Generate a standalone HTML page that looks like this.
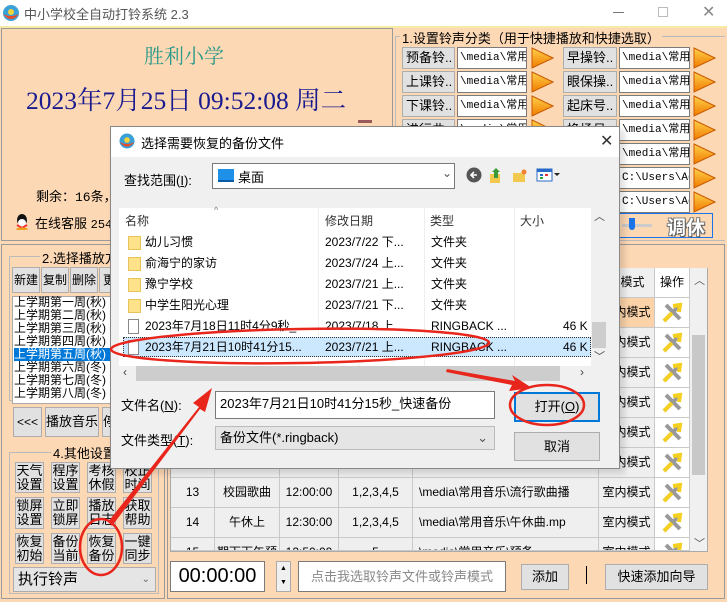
<!DOCTYPE html>
<html><head><meta charset="utf-8"><style>
*{margin:0;padding:0;box-sizing:border-box}
body{width:727px;height:602px;overflow:hidden;position:relative;background:#fdd8b4;font-family:"Liberation Sans","Noto Sans CJK SC",sans-serif;font-size:12px;color:#000}
.a{position:absolute}
.btn{position:absolute;background:#e1e1e1;border:1px solid #adadad;text-align:center;font-size:12px}
.fld{position:absolute;background:#fff;border:1px solid #7a7a7a;font-family:"Liberation Mono","Noto Sans CJK SC",monospace;font-size:11px;overflow:hidden;white-space:nowrap;line-height:20px;padding-left:2px}
.gb{position:absolute;background:#e1e1e1;border:1px solid #adadad;font-size:13px;line-height:14px;text-align:center;padding-top:1px}
.li{position:absolute;left:14px;width:98px;height:13px;line-height:13px;font-size:12px;white-space:nowrap;overflow:hidden}
.row{position:absolute;left:128px;height:21px;line-height:21px;font-size:12px;white-space:nowrap}
.cell{position:absolute;background:#efefef;border-right:1px solid #c9c9c9;border-bottom:1px solid #c9c9c9;font-size:12px;text-align:center;line-height:29px;white-space:nowrap;overflow:hidden}
</style></head><body>
<div class="a" style="left:0;top:0;width:727px;height:26px;background:#fff"></div>
<div class="a" style="left:0;top:26px;width:727px;height:2px;background:#f6eba2"></div>
<svg class="a" style="left:2px;top:4px" width="18" height="18"><circle cx="9" cy="9" r="8" fill="#3aa0d8"/><path d="M1 10 Q9 20 17 10 Q9 14 1 10Z" fill="#e84a2a"/><circle cx="9" cy="8" r="3" fill="#f5d33a"/></svg>
<div class="a" style="left:24px;top:4px;font-size:13px;color:#555">中小学校全自动打铃系统 2.3</div>
<div class="a" style="left:613px;top:12px;width:11px;height:1px;background:#777"></div>
<div class="a" style="left:658px;top:7px;width:10px;height:10px;border:1px solid #bbb"></div>
<div class="a" style="left:702px;top:2px;font-size:16px;color:#888">✕</div>

<div class="a" style="left:1px;top:28px;width:392px;height:213px;border:1px solid #9a9a9a"></div>
<div class="a" style="left:144px;top:40px;font-size:20px;color:#2a9a8a;font-family:'Liberation Serif','Noto Serif CJK SC',serif">胜利小学</div>
<div class="a" style="left:26px;top:81px;font-size:25.5px;color:#1a1a90;font-family:'Liberation Serif','Noto Serif CJK SC',serif;white-space:nowrap">2023年7月25日 09:52:08 周二</div>
<div class="a" style="left:358px;top:120px;width:14px;height:3px;background:#9a5a5a"></div>
<div class="a" style="left:36px;top:186px;font-size:13px;font-family:'Liberation Mono','Noto Sans CJK SC',monospace">剩余：16条，</div>
<svg class="a" style="left:14px;top:212px" width="16" height="18"><ellipse cx="8" cy="8" rx="5" ry="6" fill="#111"/><ellipse cx="8" cy="11" rx="4" ry="4" fill="#fff"/><path d="M3 13 L8 16 L13 13" stroke="#e33" stroke-width="2" fill="none"/><ellipse cx="8" cy="17" rx="6" ry="1.5" fill="#f0a020"/></svg>
<div class="a" style="left:35px;top:213px;font-size:13px">在线客服 <span style="font-family:'Liberation Mono',monospace;font-size:12px">2544</span></div>

<div class="a" style="left:395px;top:36px;width:330px;height:205px;border:1px solid #bbb;border-right:none"></div>
<div class="a" style="left:400px;top:28px;background:#fdd8b4;padding:0 2px;font-size:13px;white-space:nowrap">1.设置铃声分类（用于快捷播放和快捷选取）</div>
<div id="rows"></div>
<div class="a" style="left:617px;top:213px;width:96px;height:25px;border:1px solid #1a73e8"></div>
<div class="a" style="left:622px;top:224px;width:30px;height:3px;background:#ccc"></div>
<div class="a" style="left:629px;top:218px;width:6px;height:12px;background:#1a73e8;border-radius:0 0 3px 3px"></div>
<div class="a" style="left:667px;top:213px;font-size:19px;font-weight:bold;color:#fff;text-shadow:1px 1px 0 #555,-1px -1px 0 #888,1px -1px 0 #777,-1px 1px 0 #777">调休</div>

<div class="a" style="left:1px;top:244px;width:164px;height:355px;border:1px solid #9a9a9a"></div>
<div class="a" style="left:9px;top:256px;width:150px;height:145px;border:1px solid #bbb"></div>
<div class="a" style="left:40px;top:248px;background:#fdd8b4;padding:0 2px;font-size:13px;white-space:nowrap">2.选择播放方</div>
<div class="btn" style="left:12px;top:267px;width:28px;height:26px;line-height:24px">新建</div>
<div class="btn" style="left:41px;top:267px;width:28px;height:26px;line-height:24px">复制</div>
<div class="btn" style="left:70px;top:267px;width:28px;height:26px;line-height:24px">删除</div>
<div class="btn" style="left:99px;top:267px;width:20px;height:26px;line-height:24px;text-align:left;padding-left:3px">更</div>
<div class="a" style="left:12px;top:296px;width:105px;height:108px;background:#fff;border:1px solid #aaa"></div>
<div class="li" style="top:296px">上学期第一周(秋)</div>
<div class="li" style="top:309px">上学期第二周(秋)</div>
<div class="li" style="top:322px">上学期第三周(秋)</div>
<div class="li" style="top:335px">上学期第四周(秋)</div>
<div class="li" style="top:348px;background:#0078d7;color:#fff">上学期第五周(秋)</div>
<div class="li" style="top:361px">上学期第六周(冬)</div>
<div class="li" style="top:374px">上学期第七周(冬)</div>
<div class="li" style="top:387px">上学期第八周(冬)</div>
<div class="btn" style="left:13px;top:407px;width:29px;height:30px;line-height:28px">&lt;&lt;&lt;</div>
<div class="btn" style="left:45px;top:407px;width:54px;height:30px;line-height:28px;font-size:13px">播放音乐</div>
<div class="btn" style="left:102px;top:407px;width:12px;height:30px;line-height:28px;font-size:13px;text-align:left;overflow:hidden">停</div>
<div class="a" style="left:9px;top:452px;width:150px;height:142px;border:1px solid #bbb"></div>
<div class="a" style="left:51px;top:443px;background:#fdd8b4;padding:0 2px;font-size:13px">4.其他设置</div>
<div class="gb" style="left:15px;top:462px;width:29px;height:31px">天气<br>设置</div>
<div class="gb" style="left:51px;top:462px;width:29px;height:31px">程序<br>设置</div>
<div class="gb" style="left:87px;top:462px;width:29px;height:31px">考核<br>休假</div>
<div class="gb" style="left:123px;top:462px;width:29px;height:31px">校正<br>时间</div>
<div class="gb" style="left:15px;top:497px;width:29px;height:32px">锁屏<br>设置</div>
<div class="gb" style="left:51px;top:497px;width:29px;height:32px">立即<br>锁屏</div>
<div class="gb" style="left:87px;top:497px;width:29px;height:32px">播放<br>日志</div>
<div class="gb" style="left:123px;top:497px;width:29px;height:32px">获取<br>帮助</div>
<div class="gb" style="left:15px;top:533px;width:29px;height:31px">恢复<br>初始</div>
<div class="gb" style="left:51px;top:533px;width:29px;height:31px">备份<br>当前</div>
<div class="gb" style="left:87px;top:533px;width:29px;height:31px">恢复<br>备份</div>
<div class="gb" style="left:123px;top:533px;width:29px;height:31px">一键<br>同步</div>
<div class="a" style="left:13px;top:567px;width:143px;height:25px;background:#e5e5e5;border:1px solid #adadad;font-size:15px;line-height:23px;padding-left:4px">执行铃声<span style="position:absolute;right:5px;font-size:10px;color:#666">⌄</span></div>

<div class="a" style="left:167px;top:244px;width:558px;height:355px;border:1px solid #9a9a9a"></div>
<div class="a" style="left:170px;top:268px;width:538px;height:284px;background:#fff;border:1px solid #aaa"></div>
<div id="tbl"></div>
<div class="a" style="left:690px;top:268px;width:17px;height:283px;background:#f0f0f0"></div>
<div class="a" style="left:694px;top:272px;font-size:11px;color:#555">︿</div>
<div class="a" style="left:692px;top:335px;width:13px;height:140px;background:#c8c8c8"></div>
<div class="a" style="left:694px;top:535px;font-size:11px;color:#555">﹀</div>
<div class="a" style="left:170px;top:561px;width:95px;height:31px;background:#fff;border:1px solid #7a7a7a;font-size:20px;line-height:29px;text-align:center;font-family:'Liberation Sans',sans-serif">00:00:00</div>
<div class="a" style="left:276px;top:561px;width:15px;height:31px;background:#f0f0f0;border:1px solid #aaa;font-size:7px;text-align:center;line-height:14px">▲<br>▼</div>
<div class="a" style="left:298px;top:561px;width:208px;height:31px;background:#fff;border:1px solid #7a7a7a;font-size:13px;line-height:29px;text-align:center;color:#888">点击我选取铃声文件或铃声模式</div>
<div class="btn" style="left:521px;top:564px;width:48px;height:26px;line-height:24px;font-size:13px">添加</div>
<div class="a" style="left:586px;top:566px;width:1px;height:18px;background:#000"></div>
<div class="btn" style="left:605px;top:564px;width:103px;height:26px;line-height:24px;font-size:13px">快速添加向导</div>

<div class="a" style="left:113px;top:130px;width:512px;height:344px;background:rgba(0,0,0,0.12);filter:blur(3px)"></div>
<div class="a" style="left:110px;top:126px;width:510px;height:343px;background:#f0f0f0;border:1px solid #888"></div>
<div class="a" style="left:111px;top:127px;width:508px;height:30px;background:#fff"></div>
<svg class="a" style="left:119px;top:133px" width="16" height="16"><circle cx="8" cy="8" r="7.5" fill="#3aa0d8"/><path d="M0.5 9 Q8 18 15.5 9 Q8 13 0.5 9Z" fill="#e84a2a"/><circle cx="8" cy="7" r="2.8" fill="#f5d33a"/></svg>
<div class="a" style="left:141px;top:133px;font-size:13px">选择需要恢复的备份文件</div>
<div class="a" style="left:600px;top:131px;font-size:16px;color:#333">✕</div>
<div class="a" style="left:124px;top:170px;font-size:13px">查找范围(<u>I</u>):</div>
<div class="a" style="left:212px;top:163px;width:243px;height:26px;background:#fff;border:1px solid #7a7a7a"></div>
<div class="a" style="left:218px;top:169px;width:16px;height:13px;background:#1e90e8;border-bottom:2px solid #0a5aa8"></div>
<div class="a" style="left:238px;top:167px;font-size:13px">桌面</div>
<div class="a" style="left:442px;top:166px;font-size:12px;color:#555">⌄</div>
<svg class="a" style="left:466px;top:166px" width="100" height="18"><circle cx="8" cy="9" r="7.5" fill="#555"/><path d="M11 9H5M8 6L5 9L8 12" stroke="#fff" stroke-width="1.6" fill="none"/><path d="M24 8h10v9H24z" fill="#f2c94c"/><path d="M30 2l4 4h-2v6h-4V6h-2z" fill="#3a9a3a"/><path d="M47 7h12v9H47z" fill="#f2c94c"/><circle cx="58" cy="6" r="2.5" fill="#f08030"/><rect x="71" y="3" width="15" height="12" fill="#fff" stroke="#2a6ac8"/><rect x="71" y="3" width="15" height="3" fill="#2a6ac8"/><rect x="74" y="8" width="3" height="2" fill="#2a6ac8"/><rect x="79" y="8" width="3" height="2" fill="#e33"/><rect x="74" y="11" width="3" height="2" fill="#3a3"/><path d="M88 7l3 3 3-3z" fill="#222"/></svg>
<div class="a" style="left:119px;top:208px;width:472px;height:158px;background:#fff"></div>
<div class="a" style="left:318px;top:208px;width:1px;height:158px;background:#eee"></div>
<div class="a" style="left:424px;top:208px;width:1px;height:158px;background:#eee"></div>
<div class="a" style="left:514px;top:208px;width:1px;height:158px;background:#eee"></div>
<div class="a" style="left:214px;top:205px;font-size:9px;color:#777">^</div>
<div class="a" style="left:125px;top:212px;font-size:12px;color:#333">名称</div>
<div class="a" style="left:325px;top:212px;font-size:12px;color:#333">修改日期</div>
<div class="a" style="left:430px;top:212px;font-size:12px;color:#333">类型</div>
<div class="a" style="left:520px;top:212px;font-size:12px;color:#333">大小</div>
<div class="a" style="left:123px;top:337px;width:468px;height:20px;background:#cce8ff;border:1px dotted #333"></div>
<div id="files"></div>
<div class="a" style="left:591px;top:208px;width:16px;height:158px;background:#f0f0f0"></div>
<div class="a" style="left:594px;top:208px;font-size:11px;color:#444">︿</div>
<div class="a" style="left:592px;top:322px;width:14px;height:26px;background:#cdcdcd"></div>
<div class="a" style="left:594px;top:348px;font-size:11px;color:#444">﹀</div>
<div class="a" style="left:119px;top:366px;width:472px;height:16px;background:#f0f0f0"></div>
<div class="a" style="left:136px;top:366px;width:424px;height:15px;background:#cdcdcd"></div>
<div class="a" style="left:123px;top:365px;font-size:12px;color:#444">‹</div>
<div class="a" style="left:580px;top:365px;font-size:12px;color:#444">›</div>
<div class="a" style="left:121px;top:395px;font-size:13px">文件名(<u>N</u>):</div>
<div class="a" style="left:215px;top:391px;width:280px;height:28px;background:#fff;border:1px solid #7a7a7a;font-size:13px;line-height:24px;padding-left:4px;white-space:nowrap">2023年7月21日10时41分15秒_快速备份</div>
<div class="a" style="left:514px;top:392px;width:86px;height:30px;background:#e1e1e1;border:2px solid #0078d7;font-size:13px;line-height:26px;text-align:center">打开(<u>O</u>)</div>
<div class="a" style="left:121px;top:430px;font-size:13px">文件类型(<u>T</u>):</div>
<div class="a" style="left:215px;top:426px;width:280px;height:24px;background:#e5e5e5;border:1px solid #bbb;font-size:13px;line-height:22px;padding-left:4px">备份文件(*.ringback)<span style="position:absolute;right:6px;color:#555">⌄</span></div>
<div class="btn" style="left:514px;top:432px;width:86px;height:29px;line-height:27px;font-size:13px">取消</div>

<svg class="a" style="left:0;top:0" width="727" height="602">
<ellipse cx="300" cy="346" rx="189" ry="17" fill="none" stroke="#e8261c" stroke-width="2.5" transform="rotate(-1 300 346)"/>
<ellipse cx="547" cy="405" rx="37" ry="20" fill="none" stroke="#e8261c" stroke-width="2.5"/>
<ellipse cx="101" cy="547" rx="21" ry="28" fill="none" stroke="#e8261c" stroke-width="2.5"/>
<path d="M108 522 L199 407 L193 403 L212 388 L205 412 L200 409 L112 526Z" fill="#e8261c"/>
<path d="M447 369 L515 381 L512 375 L532 388 L509 391 L512 385 L446 372Z" fill="#e8261c"/>
</svg>

<script>
var r=document.getElementById('rows'),h='';
var L=['预备铃..','上课铃..','下课铃..','进行曲..','','',''],R=['早操铃..','眼保操..','起床号..','换场号..','','',''];
function arrow(x,y){return '<svg class="a" style="left:'+x+'px;top:'+y+'px" width="24" height="22"><defs><linearGradient id="g" x1="0" y1="0" x2="0" y2="1"><stop offset="0" stop-color="#ffd24a"/><stop offset="1" stop-color="#f07a00"/></linearGradient></defs><path d="M2 1 L23 11 L2 21 Z" fill="url(#g)" stroke="#c85a00"/></svg>';}
for(var i=0;i<7;i++){var y=47+i*24;
if(i<5){h+='<div class="btn" style="left:402px;top:'+y+'px;width:53px;height:22px;line-height:20px;font-size:13px;text-align:left;padding-left:3px">'+L[i]+'</div>';
h+='<div class="fld" style="left:457px;top:'+y+'px;width:70px;height:22px">\\media\\常用音</div>'+arrow(530,y);}
if(i<4)h+='<div class="btn" style="left:563px;top:'+y+'px;width:54px;height:22px;line-height:20px;font-size:13px;text-align:left;padding-left:3px">'+R[i]+'</div>';
h+='<div class="fld" style="left:619px;top:'+y+'px;width:71px;height:22px">'+(i<5?'\\media\\常用音':'C:\\Users\\Adm')+'</div>'+arrow(692,y);}
r.innerHTML=h;
var t='';
var data=[['','','','','','','声模式','操作']];
for(var k=1;k<=9;k++)data.push(['','','','','','','室内模式','']);
data[7]=['13','校园歌曲','12:00:00','1,2,3,4,5','\\media\\常用音乐\\流行歌曲播','','室内模式',''];
data[8]=['14','午休上','12:30:00','1,2,3,4,5','\\media\\常用音乐\\午休曲.mp','','室内模式',''];
data[9]=['15','期下下午预','12:50:00','5','\\media\\常用音乐\\预备','','室内模式',''];
var cols=[[171,44],[215,65],[280,59],[339,74],[413,186],[599,0],[599,56],[655,35]];
for(var j=0;j<10;j++){var y=268+j*30;var hh=(j==9)?13:30;
for(var c=0;c<8;c++){if(cols[c][1]==0)continue;var bg=(j==1&&c==6)?'#fcd3a8':(c==7?'#fff':'#efefef');
var txt=data[j][c];if(c==7&&j>0)txt='<svg width="24" height="24" style="margin-top:3px"><path d="M4 20 L18 6" stroke="#999" stroke-width="4"/><path d="M6 4 L20 18" stroke="#999" stroke-width="4"/><path d="M13 5 L20 4 L19 11" stroke="#f5d020" stroke-width="4" fill="none"/><path d="M4 20 L12 12" stroke="#f5d020" stroke-width="4"/></svg>';
t+='<div class="cell" style="left:'+cols[c][0]+'px;top:'+y+'px;width:'+cols[c][1]+'px;height:'+hh+'px;background:'+bg+';'+(c==4?'text-align:left;padding-left:6px;':'')+'">'+txt+'</div>';}}
document.getElementById('tbl').innerHTML=t;
var f=[['幼儿习惯','2023/7/22 下...','文件夹','',1],['俞海宁的家访','2023/7/24 上...','文件夹','',1],['豫宁学校','2023/7/21 上...','文件夹','',1],['中学生阳光心理','2023/7/21 下...','文件夹','',1],['2023年7月18日11时4分9秒_...','2023/7/18 上...','RINGBACK ...','46 K',0],['2023年7月21日10时41分15...','2023/7/21 上...','RINGBACK ...','46 K',0]],s='';
for(var i=0;i<6;i++){var y=232+i*21;
s+=f[i][4]?'<div class="a" style="left:128px;top:'+(y+4)+'px;width:13px;height:14px;background:#ffe38a;border:1px solid #e8c35a"></div>':'<div class="a" style="left:128px;top:'+(y+3)+'px;width:11px;height:15px;background:#fff;border:1px solid #888"></div>';
s+='<div class="row" style="left:145px;top:'+y+'px">'+f[i][0]+'</div><div class="row" style="left:325px;top:'+y+'px">'+f[i][1]+'</div><div class="row" style="left:431px;top:'+y+'px">'+f[i][2]+'</div><div class="row" style="left:563px;top:'+y+'px">'+f[i][3]+'</div>';}
document.getElementById('files').innerHTML=s;
</script>
</body></html>
